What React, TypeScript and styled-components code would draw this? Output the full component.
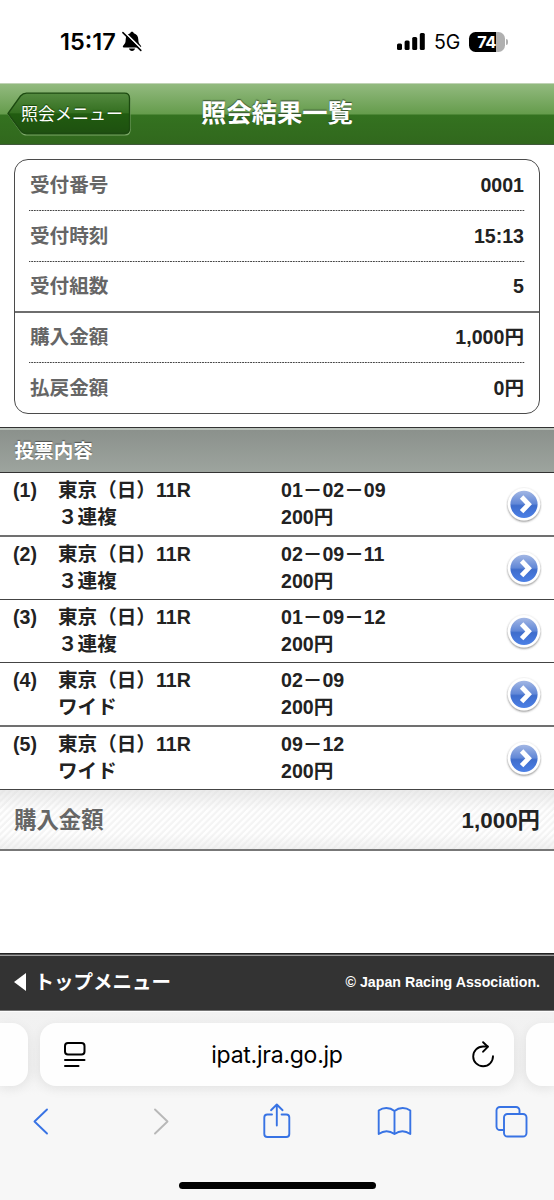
import React from "react";
import styled, { createGlobalStyle } from "styled-components";

const GlobalStyle = createGlobalStyle`
  * { box-sizing: border-box; }
  body {
    margin: 0;
    background: #fff;
    color: #222;
    font-family: "Liberation Sans", "Noto Sans CJK JP", sans-serif;
  }
`;

const Screen = styled.div`
  width: 554px;
  height: 1200px;
  display: flex;
  flex-direction: column;
  overflow: hidden;
  background: #fff;
`;

const StatusBar = styled.header`
  height: 83px;
  flex: none;
  display: flex;
  align-items: center;
  justify-content: space-between;
  padding: 0 46px 0 60px;
  color: #000;
  font-family: Inter, sans-serif;
`;

const StatusGroup = styled.div<{ $gap: number }>`
  display: flex;
  align-items: center;
  gap: ${(p) => p.$gap}px;
`;

const Clock = styled.span`
  font-size: 23.5px;
  font-weight: 600;
  line-height: 30px;
`;

const Network = styled.span`
  font-size: 19.5px;
  line-height: 30px;
  letter-spacing: -0.2px;
`;

const Battery = styled.div`
  display: flex;
  align-items: center;
  gap: 1px;
`;

const BatteryBody = styled.div`
  width: 36px;
  height: 20px;
  border-radius: 6.5px;
  background: linear-gradient(to right, #000 74%, #b0b0b0 74%);
  color: #fff;
  font-size: 16.5px;
  font-weight: 700;
  line-height: 20px;
  text-align: center;
  letter-spacing: -0.6px;
  padding-right: 1px;
`;

const BatteryCap = styled.div`
  width: 2px;
  height: 6px;
  border-radius: 0 2px 2px 0;
  background: #b0b0b0;
`;

const TitleBar = styled.div`
  height: 62px;
  flex: none;
  display: grid;
  grid-template-columns: 130px 1fr 130px;
  align-items: center;
  border-top: 1px solid #c0d3b5;
  border-bottom: 1px solid #40583a;
  background: linear-gradient(#92ba7f 0, #659c4c 30px, #347220 31px, #31681d 60px);
`;

const BackButton = styled.button`
  position: relative;
  width: 124px;
  height: 44px;
  margin: 0 0 0 7px;
  padding: 0 0 0 14px;
  border: 0;
  background: none;
  color: #fff;
  font: 400 17px/43px "Liberation Sans", "Noto Sans CJK JP", sans-serif;
  text-align: left;
  white-space: nowrap;
  text-shadow: 0 -1px 1px #174509;
`;

const BackShape = styled.svg`
  position: absolute;
  inset: 0;
  width: 124px;
  height: 44px;
`;

const BackLabel = styled.span`
  position: relative;
`;

const Title = styled.h1`
  margin: 0 0 2px;
  color: #fff;
  font-size: 25.3px;
  font-weight: 700;
  line-height: 36px;
  text-align: center;
  white-space: nowrap;
  text-shadow: 0 -1px 1px rgba(40, 60, 40, 0.8);
`;

const Card = styled.section`
  flex: none;
  height: 255px;
  margin: 14px 14px 0;
  border: 1.5px solid #4b4b4b;
  border-radius: 14px;
  display: grid;
  grid-template-rows: 51px 51px 51px 50px 50px;
`;

const CardRow = styled.div<{ $rule: "dotted" | "solid" | "none" }>`
  display: flex;
  align-items: center;
  justify-content: space-between;
  margin: ${(p) => (p.$rule === "solid" ? "0" : "0 14px")};
  padding: ${(p) => (p.$rule === "solid" ? "0 15px 1px" : p.$rule === "dotted" ? "0 1px 2px" : "0 1px")};
  font-size: 19.6px;
  font-weight: 700;
  line-height: 28px;
  ${(p) =>
    p.$rule === "dotted" &&
    `background: repeating-linear-gradient(to right, #444 0, #444 0.9px, #ddd 1.6px, #ddd 2px, #444 2.67px) 0 100% / 100% 1px no-repeat;`}
  ${(p) => p.$rule === "solid" && "border-bottom: 2px solid #6e6e6e;"}
`;

const Label = styled.span`
  color: #666;
`;

const SectionHeader = styled.h2`
  flex: none;
  height: 46px;
  margin: 13px 0 0;
  padding: 0 14.5px;
  border-top: 1px solid #333;
  border-bottom: 1px solid #333;
  background: linear-gradient(#b9c1ba 0 2px, #8b918c 2px, #9da49e 100%);
  color: #fff;
  font-size: 19.6px;
  font-weight: 700;
  line-height: 46px;
  text-shadow: 0 -1px 1px rgba(60, 60, 60, 0.7);
`;

const BetList = styled.ul`
  flex: none;
  height: 317px;
  margin: 0;
  padding: 0;
  list-style: none;
  display: grid;
  grid-template-rows: 64px 63px 63px 64px 63px;
`;

const BetRow = styled.li`
  display: grid;
  grid-template-columns: 45px 223px 1fr 36px;
  align-items: start;
  padding: 4px 12px 0 13px;
  border-bottom: 1px solid #444;
  font-size: 19.6px;
  font-weight: 700;
  line-height: 26.6px;
  white-space: nowrap;

  &:nth-child(1),
  &:nth-child(4) {
    border-bottom: 2px solid #707070;
  }
`;

const BetCell = styled.div`
  display: flex;
  flex-direction: column;
`;

const ArrowButton = styled.button`
  width: 36px;
  height: 38px;
  margin-top: 9px;
  padding: 0;
  border: 0;
  background: none;
  justify-self: end;
  display: block;
`;

const TotalRow = styled.div`
  flex: none;
  height: 61px;
  display: flex;
  align-items: center;
  justify-content: space-between;
  padding: 0 14px 4px 14px;
  border-bottom: 2px solid #777;
  background:
    linear-gradient(rgba(215, 215, 215, 0.5), rgba(255, 255, 255, 0) 35%, rgba(255, 255, 255, 0) 75%, rgba(225, 225, 225, 0.45)),
    repeating-linear-gradient(135deg, #fefefe 0 1.5px, #f4f4f4 2.8px 4px, #fefefe 4.72px);
  font-size: 22.4px;
  font-weight: 700;
`;

const Spacer = styled.div`
  flex: 1;
`;

const PageFooter = styled.footer`
  flex: none;
  height: 58px;
  display: flex;
  align-items: center;
  justify-content: space-between;
  padding: 0 14px;
  background: linear-gradient(#222 0 1px, #555 1px 2px, #a0a0a0 2px 3px, #333 3px 57px, #757575 57px);
  color: #fff;
  font-weight: 700;
`;

const TopLink = styled.a`
  display: flex;
  align-items: center;
  gap: 8.5px;
  color: #fff;
  font-size: 19.5px;
  line-height: 28px;
`;

const Copyright = styled.small`
  font-size: 14.2px;
`;

const Browser = styled.div`
  flex: none;
  height: 189px;
  display: flex;
  flex-direction: column;
  align-items: center;
  background: #f7f7f7;
  border-top: 1px solid #fdfdfd;
`;

const TabStrip = styled.div`
  width: 100%;
  height: 83px;
  display: grid;
  grid-template-columns: 28px 474px 28px;
  column-gap: 12px;
  padding-top: 11px;
  background: linear-gradient(#f2f2f2, #f0f0f0 70%, #f7f7f7);
`;

const Tab = styled.div<{ $side?: "left" | "right" }>`
  height: 63px;
  border-radius: ${(p) =>
    p.$side === "left" ? "0 16px 16px 0" : p.$side === "right" ? "16px 0 0 16px" : "16px"};
  background: #fefefe;
  box-shadow: 0 3px 12px rgba(0, 0, 0, 0.07);
  display: grid;
  grid-template-columns: ${(p) => (p.$side ? "1fr" : "70px 1fr 62px")};
  align-items: center;
  justify-items: center;
`;

const Address = styled.span`
  color: #000;
  font: 400 23px/32px Inter, sans-serif;
  letter-spacing: -0.25px;
  margin-right: 8px;
  white-space: nowrap;
`;

const Toolbar = styled.nav`
  width: 100%;
  height: 52px;
  display: flex;
  justify-content: space-between;
  align-items: center;
  padding: 0 24px 0 22px;
`;

const HomeIndicator = styled.div`
  width: 197px;
  height: 7px;
  margin-top: 35px;
  border-radius: 4px;
  background: #000;
`;

const MutedBell = () => (
  <svg width="20" height="21" viewBox="0 0 20 21">
    <path d="M10 0.8c-.9 0-1.7.6-1.8 1.5C5.200 3.200 3.800 5.500 3.700 8.500c-.1 3-.6 4.200-2.200 5.700-.5.5-.7.8-.7 1.300 0 .6.4.9 1.100.9h16.200c.7 0 1.100-.3 1.100-.9 0-.5-.2-.8-.7-1.300-1.600-1.500-2.100-2.700-2.200-5.700-.1-3-1.500-5.300-4.500-6.200C11.700 1.400 10.900.8 10 .8z" />
    <path d="M7 17.600h6c-.3 1.500-1.500 2.400-3 2.400s-2.700-.9-3-2.400z" />
    <path d="M1.900 0.700 20 18.600" stroke="#fff" strokeWidth="1.800" />
    <path d="M.9 1.600 18.800 19.400" stroke="#000" strokeWidth="1.500" strokeLinecap="round" />
  </svg>
);

const Signal = () => (
  <svg width="28" height="18" viewBox="0 0 28 18">
    <rect x="0" y="10.500" width="5" height="6.500" rx="1.500" />
    <rect x="7.600" y="7.500" width="5" height="9.500" rx="1.500" />
    <rect x="15.200" y="4" width="5" height="13" rx="1.500" />
    <rect x="22.800" y="0" width="5" height="17" rx="1.500" />
  </svg>
);

const ArrowIcon = () => (
  <svg width="36" height="38" viewBox="0 0 36 38">
    <defs>
      <linearGradient id="disc" x1="0" y1="0" x2="0" y2="1">
        <stop offset="0" stopColor="#a3b7e4" />
        <stop offset="0.480" stopColor="#6288d7" />
        <stop offset="0.550" stopColor="#3f6dcc" />
        <stop offset="1" stopColor="#4c80e6" />
      </linearGradient>
      <filter id="discShadow" x="-20%" y="-20%" width="140%" height="150%">
        <feDropShadow dx="0" dy="1" stdDeviation="1.100" floodColor="#555" floodOpacity="0.750" />
      </filter>
    </defs>
    <circle cx="18" cy="18.300" r="16.200" fill="#fff" filter="url(#discShadow)" />
    <circle cx="18" cy="18.300" r="13.600" fill="url(#disc)" />
    <path d="m15.600 11 7 7.300-7 7.300" fill="none" stroke="#fff" strokeWidth="4.800" />
  </svg>
);

const ReaderIcon = () => (
  <svg width="24" height="28" viewBox="0 0 24 28" fill="none" stroke="#000" strokeWidth="2" strokeLinecap="round">
    <rect x="2" y="2" width="19.500" height="11.500" rx="3" />
    <path d="M2 19h19.500M2 25h13.500" />
  </svg>
);

const ReloadIcon = () => (
  <svg width="24" height="28" viewBox="0 0 24 28" fill="none" stroke="#000" strokeWidth="1.900" strokeLinecap="round" strokeLinejoin="round">
    <path d="M22 15.300a9.900 9.900 0 1 1-9.900-9.800h4.700" />
    <path d="m12.100 1.200 4.700 4.600-4.700 4.900" />
  </svg>
);

const ToolIcon = styled.svg<{ $color?: string }>`
  display: block;
  fill: none;
  stroke: ${(p) => p.$color ?? "#3873e4"};
  stroke-width: 1.9;
  stroke-linecap: round;
  stroke-linejoin: round;
`;

const summary: { label: string; value: string; rule: "dotted" | "solid" | "none" }[] = [
  { label: "受付番号", value: "0001", rule: "dotted" },
  { label: "受付時刻", value: "15:13", rule: "dotted" },
  { label: "受付組数", value: "5", rule: "solid" },
  { label: "購入金額", value: "1,000円", rule: "dotted" },
  { label: "払戻金額", value: "0円", rule: "none" },
];

const bets = [
  { type: "３連複", numbers: "01－02－09" },
  { type: "３連複", numbers: "02－09－11" },
  { type: "３連複", numbers: "01－09－12" },
  { type: "ワイド", numbers: "02－09" },
  { type: "ワイド", numbers: "09－12" },
];

export default function App() {
  return (
    <Screen lang="ja">
      <GlobalStyle />
      <StatusBar>
        <StatusGroup $gap={6}>
          <Clock>15:17</Clock>
          <MutedBell />
        </StatusGroup>
        <StatusGroup $gap={9}>
          <Signal />
          <Network>5G</Network>
          <Battery>
            <BatteryBody>74</BatteryBody>
            <BatteryCap />
          </Battery>
        </StatusGroup>
      </StatusBar>

      <TitleBar>
        <BackButton>
          <BackShape viewBox="0 0 124 44">
            <defs>
              <linearGradient id="back" x1="0" y1="0" x2="0" y2="1">
                <stop offset="0" stopColor="#548a40" />
                <stop offset="0.490" stopColor="#346f20" />
                <stop offset="0.510" stopColor="#215c10" />
                <stop offset="1" stopColor="#1e5010" />
              </linearGradient>
            </defs>
            <path d="M1.500 22.500 14 5Q16.500 2 20 2h98q5 0 5 5v31q0 5-5 5H20q-3.500 0-6-3z" fill="none" stroke="#7ea86b" strokeWidth="1.200" />
            <path d="M1 21.500 13.500 4Q16 1.200 19.500 1.200H117.500q5 0 5 5V36.500q0 5-5 5H19.500q-3.500 0-6-3z" fill="url(#back)" stroke="#1c4a10" strokeWidth="1.300" />
          </BackShape>
          <BackLabel>照会メニュー</BackLabel>
        </BackButton>
        <Title>照会結果一覧</Title>
      </TitleBar>

      <Card>
        {summary.map((row) => (
          <CardRow key={row.label} $rule={row.rule}>
            <Label>{row.label}</Label>
            <span>{row.value}</span>
          </CardRow>
        ))}
      </Card>

      <SectionHeader>投票内容</SectionHeader>
      <BetList>
        {bets.map((bet, i) => (
          <BetRow key={i}>
            <span>({i + 1})</span>
            <BetCell>
              <span>東京（日）11R</span>
              <span>{bet.type}</span>
            </BetCell>
            <BetCell>
              <span>{bet.numbers}</span>
              <span>200円</span>
            </BetCell>
            <ArrowButton aria-label="詳細">
              <ArrowIcon />
            </ArrowButton>
          </BetRow>
        ))}
      </BetList>
      <TotalRow>
        <Label>購入金額</Label>
        <span>1,000円</span>
      </TotalRow>

      <Spacer />

      <PageFooter>
        <TopLink>
          <svg width="12" height="20" viewBox="0 0 12 20">
            <path d="M12 1v18L0 10z" fill="#fff" />
          </svg>
          トップメニュー
        </TopLink>
        <Copyright>© Japan Racing Association.</Copyright>
      </PageFooter>

      <Browser>
        <TabStrip>
          <Tab $side="left" />
          <Tab>
            <ReaderIcon />
            <Address>ipat.jra.go.jp</Address>
            <ReloadIcon />
          </Tab>
          <Tab $side="right" />
        </TabStrip>
        <Toolbar>
          <ToolIcon width="36" height="36" viewBox="0 0 36 36">
            <path d="M25 6.500 12.500 18.500 25 30.500" />
          </ToolIcon>
          <ToolIcon width="36" height="36" viewBox="0 0 36 36" $color="#b8b8b8">
            <path d="m15 6.500 12.500 12L15 30.500" />
          </ToolIcon>
          <ToolIcon width="36" height="36" viewBox="0 0 36 36">
            <path d="M14 11.500H9.300a3 3 0 0 0-3 3v16.500a3 3 0 0 0 3 3h19a3 3 0 0 0 3-3V14.500a3 3 0 0 0-3-3h-4.700M18.800 22.500V1.500M13 7.200l5.800-5.700 5.800 5.700" />
          </ToolIcon>
          <ToolIcon width="36" height="36" viewBox="0 0 36 36">
            <path d="M18.500 8C13.500 3.900 7 4.400 2.700 7.500v23.500c5-3.400 10.800-3.400 15.800 0 5-3.400 10.800-3.400 15.800 0V7.500C30 4.400 23.500 3.900 18.500 8zM18.500 8v23" />
          </ToolIcon>
          <ToolIcon width="36" height="36" viewBox="0 0 36 36">
            <rect x="10" y="11" width="22.500" height="22.500" rx="3.500" />
            <path d="M10 27H6a3.500 3.500 0 0 1-3.500-3.500V7.500A3.500 3.500 0 0 1 6 4h16a3.500 3.500 0 0 1 3.500 3.500V11" />
          </ToolIcon>
        </Toolbar>
        <HomeIndicator />
      </Browser>
    </Screen>
  );
}
